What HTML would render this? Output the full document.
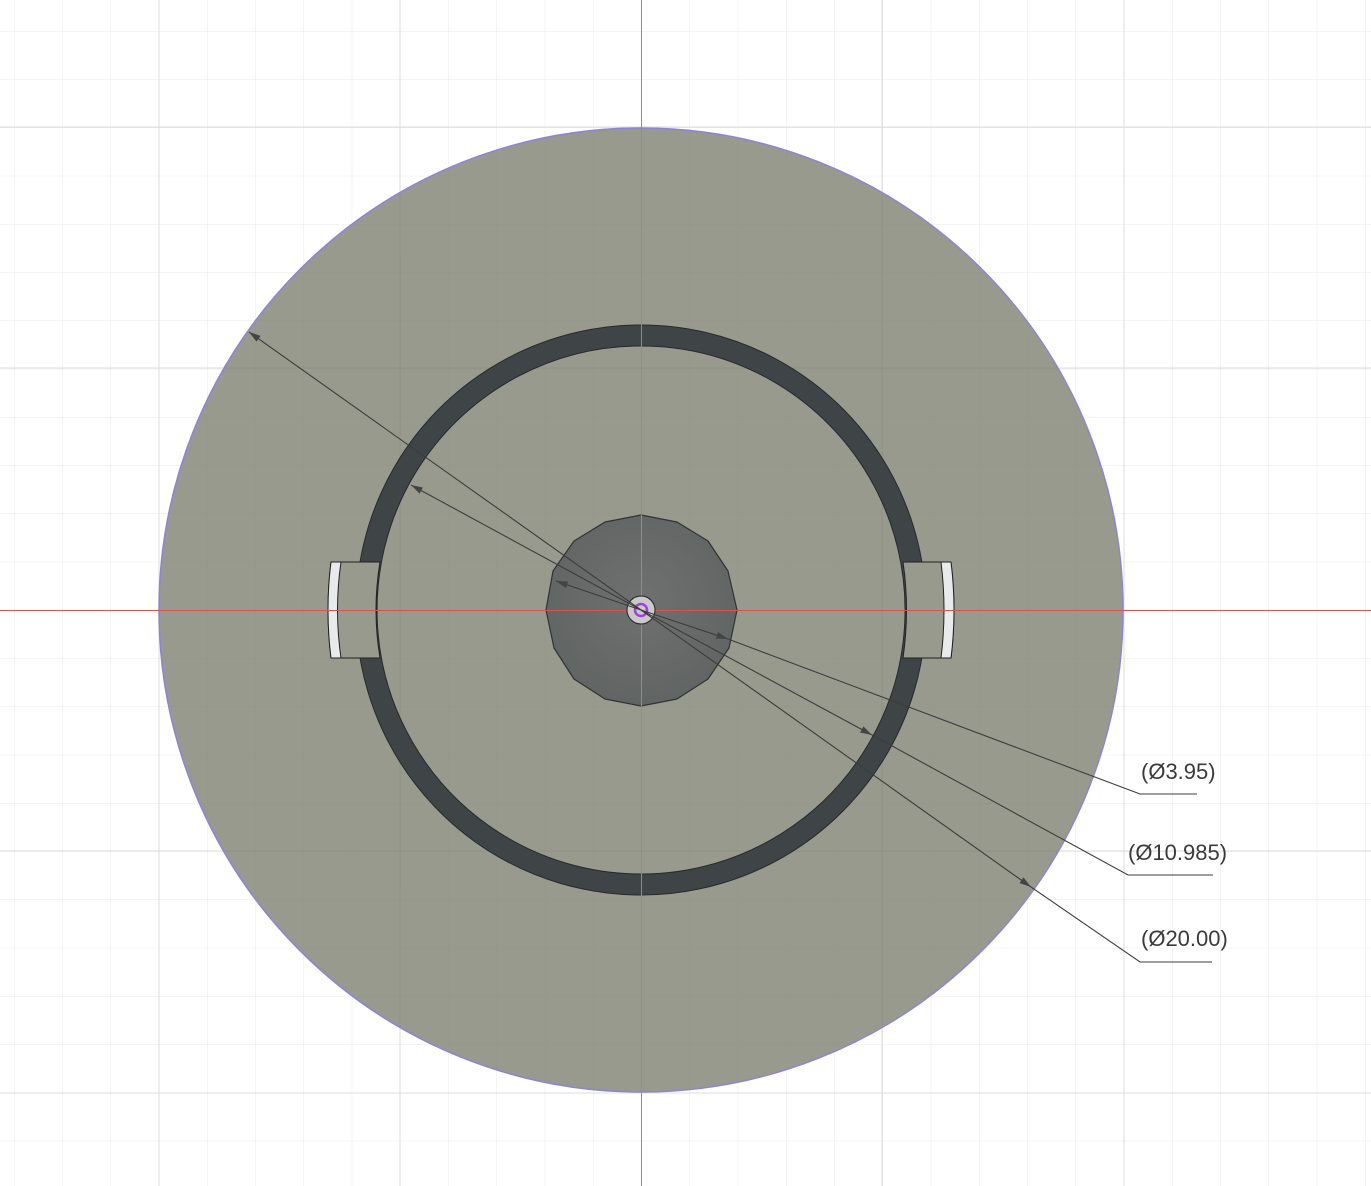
<!DOCTYPE html>
<html><head><style>
html,body{margin:0;padding:0;background:#fff;overflow:hidden}
svg{display:block}
text{font-family:"Liberation Sans",sans-serif;font-size:22px;fill:#3a3a3a}
</style></head><body>
<svg width="1371" height="1186" viewBox="0 0 1371 1186">
<defs>
<pattern id="minor" x="14" y="31" width="48.25" height="48.25" patternUnits="userSpaceOnUse">
<path d="M0 0V48.25M0 0H48.25" stroke="#e8e8e8" stroke-width="1" fill="none"/>
</pattern>
<pattern id="minor2" x="14" y="31" width="48.25" height="48.25" patternUnits="userSpaceOnUse">
<path d="M0 0V48.25M0 0H48.25" stroke="#8d8e83" stroke-width="1" fill="none"/>
</pattern>
<clipPath id="cc"><circle cx="641" cy="610" r="481"/></clipPath>
<radialGradient id="disc" cx="0.5" cy="0.45" r="0.6">
<stop offset="0" stop-color="#6e7170"/><stop offset="1" stop-color="#5f6362"/>
</radialGradient>
<marker id="ar" viewBox="0 0 10 6" refX="10" refY="3" markerWidth="14" markerHeight="7" orient="auto-start-reverse" markerUnits="userSpaceOnUse">
<path d="M0 0L10 3L0 6z" fill="#444"/>
</marker>
</defs>
<rect width="1371" height="1186" fill="#fff"/>
<rect width="1371" height="1186" fill="url(#minor)"/>
<g stroke="#dedede" stroke-width="1">
<path d="M159 0V1186M400 0V1186M882 0V1186M1124 0V1186M0 127H1371M0 368H1371M0 851H1371M0 1093H1371"/>
</g>
<circle cx="641" cy="610" r="482" fill="#999a8e" stroke="#8b84d8" stroke-width="1.5"/>
<g clip-path="url(#cc)">
<rect width="1371" height="1186" fill="url(#minor2)" opacity="0.35"/>
<path d="M400 0V1186M882 0V1186M0 368H1371M0 851H1371" stroke="#8a8b80" stroke-width="1" opacity="0.5"/>
</g>
<!-- ring -->
<path d="M641 325A285 285 0 1 1 640.9 325ZM641 346A264 264 0 1 0 641.1 346Z" fill="#3f4547" fill-rule="evenodd" stroke="#262a2b" stroke-width="1"/>
<!-- tabs -->
<path d="M331 562H380Q372 610 380 658H331Q325 610 331 562Z" fill="#999a8e" stroke="#222" stroke-width="1"/>
<path d="M331 562H341Q334 610 341 658H331Q325 610 331 562Z" fill="#e8eaec" stroke="#222" stroke-width="1"/>
<path d="M903 562H951Q957 610 951 658H903Q910 610 903 562Z" fill="#999a8e" stroke="#222" stroke-width="1"/>
<path d="M941 562H951Q957 610 951 658H941Q947 610 941 562Z" fill="#e8eaec" stroke="#222" stroke-width="1"/>
<!-- disc -->
<polygon points="641,515 677,522 708,541 728,571 737,610 729,648 708,679 677,699 641,706 605,699 574,679 554,648 546,610 553,571 574,541 605,522" fill="url(#disc)" stroke="#2f3333" stroke-width="1.2" stroke-linejoin="round"/>
<!-- axes -->
<rect x="0" y="610" width="1371" height="1" fill="#d9534f"/>
<rect x="641" y="0" width="1" height="1186" fill="#3cc83c"/>
<circle cx="641" cy="610" r="14" fill="#c9c9c9" stroke="#222" stroke-width="1"/>
<circle cx="641" cy="610" r="6" fill="none" stroke="#a040e0" stroke-width="2.5"/>
<!-- dimension lines -->
<g stroke="#3c3c3c" stroke-width="1.1" fill="none">
<line x1="641" y1="610" x2="249" y2="332" marker-end="url(#ar)"/>
<line x1="641" y1="610" x2="1031" y2="887" marker-end="url(#ar)"/>
<polyline points="1031,887 1140,962 1212,962"/>
<line x1="641" y1="610" x2="411" y2="485" marker-end="url(#ar)"/>
<line x1="641" y1="610" x2="872" y2="735" marker-end="url(#ar)"/>
<polyline points="872,735 1128,875 1213,875"/>
<line x1="641" y1="610" x2="556" y2="581" marker-end="url(#ar)"/>
<line x1="641" y1="610" x2="728" y2="639" marker-end="url(#ar)"/>
<polyline points="728,639 1140,794 1197,794"/>
</g>
<text x="1141" y="779">(Ø3.95)</text>
<text x="1128" y="860">(Ø10.985)</text>
<text x="1141" y="946">(Ø20.00)</text>
</svg>
</body></html>
